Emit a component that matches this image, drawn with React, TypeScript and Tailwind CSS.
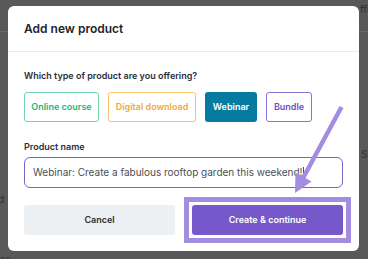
import React from 'react';

type ProductType = {
  label: string;
  className: string;
};

const productTypes: ProductType[] = [
  { label: 'Online course', className: 'w-[75px] border border-[#6fd6ad] text-[#22b67f] bg-white' },
  { label: 'Digital download', className: 'w-[88px] border border-[#f5c66e] text-[#f0a83c] bg-white' },
  { label: 'Webinar', className: 'w-[52px] bg-[#077b9f] text-white' },
  { label: 'Bundle', className: 'w-[46px] border border-[#8d72db] text-[#6a4fc6] bg-white' },
];

const Arrow = () => (
  <svg
    className="absolute left-0 top-0 pointer-events-none"
    width="368"
    height="259"
    viewBox="0 0 368 259"
  >
    <line x1="341.5" y1="107" x2="302" y2="180" stroke="#a48de0" strokeWidth="4.5" />
    <polygon points="295,193 311.5,181.5 295.5,172.5" fill="#a48de0" />
  </svg>
);

export default function App() {
  return (
    <div
      className="relative w-[368px] h-[259px] overflow-hidden bg-[#595959]"
      style={{ fontFamily: 'Inter, "Noto Sans", sans-serif' }}
    >
      {/* page behind the overlay */}
      <div className="absolute left-0 right-0 top-[31px] border-t border-[#6a6a6a]" />
      <span className="absolute left-[360px] top-[2px] text-[10px] text-[#2f2f2f]">ffi</span>
      <span className="absolute left-[361px] top-[147px] text-[10px] text-[#2f2f2f]">Sh</span>
      <span className="absolute left-[-2px] top-[192px] text-[10px] text-[#2f2f2f]">d</span>
      <span className="absolute left-0 top-[252px] text-[10px] text-[#2f2f2f]">ss</span>

      {/* modal */}
      <div className="relative ml-[8px] mt-[6px] w-[351px] h-[245px] rounded-[6px] bg-white">
        <div className="h-[46px] px-4 flex items-center border-b border-[#e6ebf1]">
          <h2 className="text-[12px] font-semibold text-[#1f2328]">Add new product</h2>
        </div>

        <div className="px-4 pt-[17px]">
          <p className="h-[14px] leading-[14px] text-[9px] font-semibold text-[#2b2f36]">
            Which type of product are you offering?
          </p>

          <div className="mt-[9px] flex gap-[9px]">
            {productTypes.map((t) => (
              <button
                key={t.label}
                className={`h-[30px] rounded-[3px] flex items-center justify-center text-[9px] font-semibold ${t.className}`}
              >
                {t.label}
              </button>
            ))}
          </div>

          <label className="block mt-[18px] h-[14px] leading-[14px] text-[9px] font-semibold text-[#2b2f36]">
            Product name
          </label>
          <div className="mt-[3px] h-[31px] rounded-[6px] border border-[#7d5fd2] px-2 flex items-center text-[10px] text-[#4a4f57]">
            Webinar: Create a fabulous rooftop garden this weekend!
            <span className="ml-px w-px h-[12px] bg-[#4a4f57]" />
          </div>

          <div className="mt-[17px] grid grid-cols-2 gap-[17px]">
            <button className="h-[30px] rounded-[3px] bg-[#edf0f3] text-[9px] font-semibold text-[#2b2f36]">
              Cancel
            </button>
            <div className="-m-[8px] border-[5px] border-[#a48de0] bg-white p-[3px]">
              <button className="w-full h-[30px] rounded-[3px] bg-[#7658cb] text-[9px] font-semibold text-white">
                Create &amp; continue
              </button>
            </div>
          </div>
        </div>
      </div>

      <Arrow />
    </div>
  );
}
